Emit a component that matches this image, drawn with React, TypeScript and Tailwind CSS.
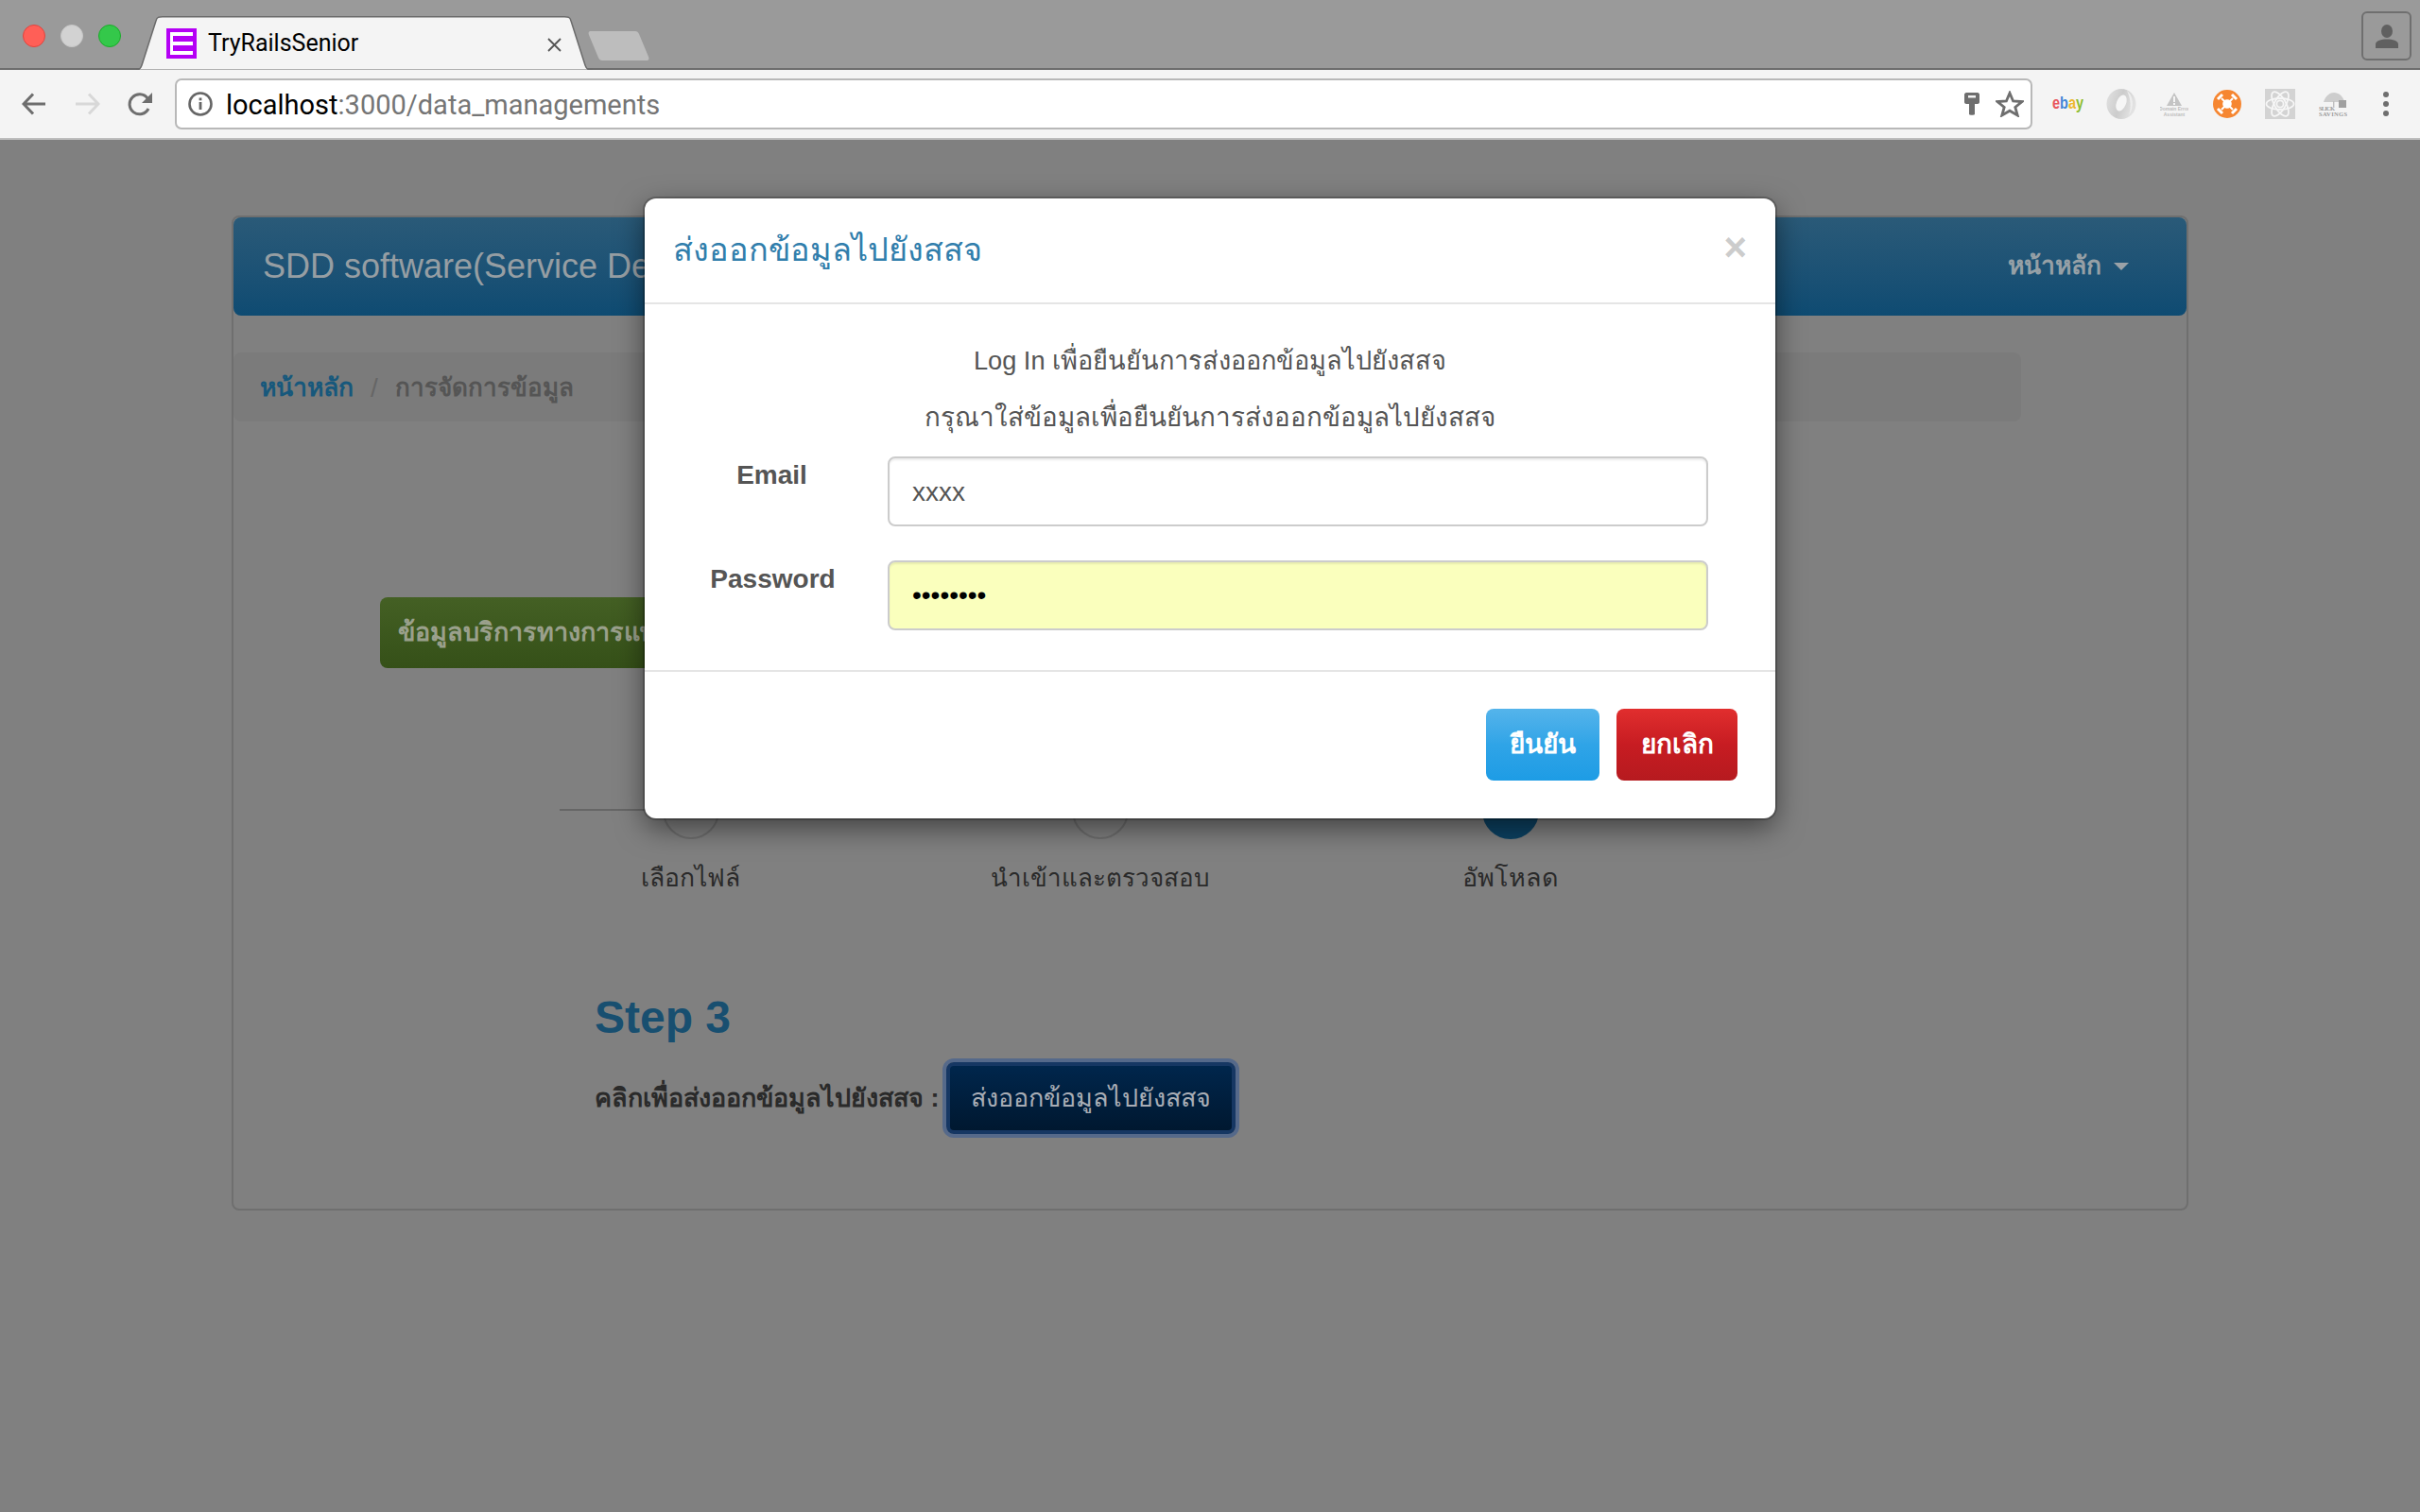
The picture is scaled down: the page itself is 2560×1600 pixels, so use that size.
import React from "react";

function Tab() {
  return (
    <div className="relative ml-[16px] mt-[17px] h-[57px] w-[483px] shrink-0">
      <svg className="absolute inset-0" width="483" height="57" viewBox="0 0 483 57">
        <path d="M0 56.5 H2 C4 56.5 5 55 6 52 L21 5 C22 1 24 0.8 28 0.8 H453 C457 0.8 459 1 460 5 L475 52 C476 55 477 56.5 479 56.5 H483" fill="#f4f4f4" stroke="#6b6b6b" strokeWidth="1.5" />
      </svg>
      <div className="absolute left-[32px] top-[13px] flex items-center">
        <svg width="32" height="32" viewBox="0 0 32 32">
          <rect width="32" height="32" fill="#b400f5" />
          <rect x="4" y="4" width="3" height="24" fill="#fff" />
          <rect x="4" y="4" width="24" height="4" fill="#fff" />
          <rect x="4" y="14" width="24" height="4" fill="#fff" />
          <rect x="4" y="24" width="24" height="4" fill="#fff" />
        </svg>
        <span className="ml-[12px] font-['Roboto',sans-serif] text-[25px] leading-[32px] text-black">TryRailsSenior</span>
      </div>
      <svg className="absolute left-[435px] top-[23px]" width="15" height="15" viewBox="0 0 15 15">
        <path d="M1 1 L14 14 M14 1 L1 14" stroke="#555" strokeWidth="1.8" />
      </svg>
    </div>
  );
}

function TopBar() {
  return (
    <div className="flex h-[74px] shrink-0 border-b-2 border-[#6d6d6d] bg-[#9a9a9a]">
      <div className="ml-[24px] mt-[26px] flex h-[24px] gap-[16px]">
        <span className="h-[24px] w-[24px] rounded-full border border-[#e0443e] bg-[#ff5f57]" />
        <span className="h-[24px] w-[24px] rounded-full border border-[#c6c6c6] bg-[#d2d2d2]" />
        <span className="h-[24px] w-[24px] rounded-full border border-[#1aab29] bg-[#34c84a]" />
      </div>
      <Tab />
      <svg className="ml-[-5px] mt-[33px] shrink-0" width="65" height="31" viewBox="0 0 65 31">
        <path d="M3 0 H50 C52 0 53 1 54 3 L64 27 C65 30 64 31 62 31 H15 C13 31 12 30 11 28 L1 4 C0 1 1 0 3 0 Z" fill="#bdbdbd" />
      </svg>
      <div className="ml-auto mr-[9px] mt-[12px] flex h-[52px] w-[53px] items-center justify-center rounded-[6px] border-2 border-[#6f6f6f]">
        <svg width="24" height="25" viewBox="0 0 24 25">
          <ellipse cx="12" cy="7" rx="6" ry="7" fill="#606060" />
          <path d="M0 25 V21 C0 17 6 15.5 12 15.5 C18 15.5 24 17 24 21 V25 Z" fill="#606060" />
        </svg>
      </div>
    </div>
  );
}

function Toolbar() {
  return (
    <div className="flex h-[74px] shrink-0 items-center border-b-2 border-[#bdbdbd] bg-[#f4f4f4]">
      <svg className="ml-[23px] shrink-0" width="25" height="24" viewBox="0 0 25 24">
        <path d="M12 1.5 L2 12 L12 22.5 M2.5 12 H25" fill="none" stroke="#6e6e6e" strokeWidth="3" />
      </svg>
      <svg className="ml-[32px] shrink-0" width="26" height="24" viewBox="0 0 26 24">
        <path d="M14 1.5 L24 12 L14 22.5 M23.5 12 H0" fill="none" stroke="#d8d8d8" strokeWidth="3" />
      </svg>
      <svg className="ml-[29px] shrink-0" width="27" height="25" viewBox="0 0 27 25">
        <path d="M22 17 A10.5 10.5 0 1 1 21 6" fill="none" stroke="#6e6e6e" strokeWidth="3" />
        <path d="M26 0 V11 H15 Z" fill="#6e6e6e" />
      </svg>
      <div className="ml-[23px] flex h-[54px] w-[1965px] shrink-0 items-center rounded-[7px] border-2 border-[#b8b8b8] bg-white pl-[12px] pr-[7px]">
        <svg width="26" height="26" viewBox="0 0 26 26">
          <circle cx="13" cy="13" r="11.5" fill="none" stroke="#666" strokeWidth="2.6" />
          <rect x="11.6" y="11" width="2.8" height="8" fill="#666" />
          <rect x="11.6" y="6.5" width="2.8" height="2.8" fill="#666" />
        </svg>
        <span className="ml-[14px] pt-[2px] font-['Roboto',sans-serif] text-[29px] leading-[34px] text-black">
          localhost<span className="text-[#757575]">:3000/data_managements</span>
        </span>
        <svg className="ml-auto" width="16" height="24" viewBox="0 0 16 24">
          <path d="M2 0 H14 C15 0 16 1 16 2 V10 C16 11 15 12 14 12 H11 V23 C11 24 5 24 5 23 V12 H2 C1 12 0 11 0 10 V2 C0 1 1 0 2 0 Z" fill="#6e6e6e" />
          <rect x="4" y="3" width="8" height="2.5" fill="#f4f4f4" />
        </svg>
        <svg className="ml-[17px]" width="30" height="28" viewBox="0 0 30 28">
          <path d="M15 2.5 L18.6 11 L28 11.5 L20.8 17.4 L23.2 26 L15 21.2 L6.8 26 L9.2 17.4 L2 11.5 L11.4 11 Z" fill="none" stroke="#6e6e6e" strokeWidth="2.8" />
        </svg>
      </div>
      <svg className="ml-[21px] shrink-0" width="33" height="20" viewBox="0 0 33 20">
        <text x="0" y="15" fontFamily="Liberation Sans" fontSize="18" fontWeight="700" textLength="33" lengthAdjust="spacingAndGlyphs">
          <tspan fill="#e8565c">e</tspan>
          <tspan fill="#3f86d8">b</tspan>
          <tspan fill="#eeb82e">a</tspan>
          <tspan fill="#8dbd2e">y</tspan>
        </text>
      </svg>
      <svg className="ml-[24px] shrink-0" width="32" height="32" viewBox="0 0 32 32">
        <defs>
          <linearGradient id="ringGradient" x1="0" y1="0" x2="1" y2="0.3">
            <stop offset="0" stopColor="#e2e2e2" />
            <stop offset="0.55" stopColor="#cccccc" />
            <stop offset="1" stopColor="#e2e2e2" />
          </linearGradient>
        </defs>
        <ellipse cx="16" cy="16" rx="15.5" ry="16" fill="url(#ringGradient)" />
        <ellipse cx="16" cy="15" rx="5" ry="9" fill="#f6f6f6" transform="rotate(22 16 15)" />
        <path d="M22 2 C29 7 30 20 24 28 C27 20 26 10 22 2 Z" fill="#eeeeee" />
      </svg>
      <svg className="ml-[25px] shrink-0" width="30" height="25" viewBox="0 0 30 25">
        <path d="M15 0 L23 14 H7 Z" fill="#c4c4c4" />
        <rect x="14" y="4" width="2" height="6" fill="#f4f4f4" />
        <rect x="14" y="11" width="2" height="2" fill="#f4f4f4" />
        <text x="15" y="19" textAnchor="middle" fontFamily="Liberation Sans" fontSize="5" fontWeight="700" fill="#bdbdbd">Domain Error</text>
        <text x="15" y="25" textAnchor="middle" fontFamily="Liberation Sans" fontSize="5" fontWeight="700" fill="#bdbdbd">Assistant</text>
      </svg>
      <svg className="ml-[26px] shrink-0" width="30" height="30" viewBox="0 0 30 30">
        <circle cx="15" cy="15" r="15" fill="#f68631" />
        <path d="M9 9 L21 21 M21 9 L9 21" stroke="#fff" strokeWidth="2" />
        <circle cx="15" cy="15" r="4.8" fill="#fff" />
        <path d="M5 10 L10 5 M20 5 L25 10 M5 20 L10 25 M25 20 L20 25" stroke="#fff" strokeWidth="3" />
      </svg>
      <svg className="ml-[25px] shrink-0" width="32" height="32" viewBox="0 0 32 32">
        <rect width="32" height="32" fill="#d3d3d3" />
        <ellipse cx="16" cy="16" rx="14.5" ry="6" fill="none" stroke="#f6f6f6" strokeWidth="1.8" />
        <ellipse cx="16" cy="16" rx="14.5" ry="6" fill="none" stroke="#f6f6f6" strokeWidth="1.8" transform="rotate(60 16 16)" />
        <ellipse cx="16" cy="16" rx="14.5" ry="6" fill="none" stroke="#f6f6f6" strokeWidth="1.8" transform="rotate(120 16 16)" />
        <circle cx="16" cy="16" r="3.6" fill="none" stroke="#f6f6f6" strokeWidth="1.8" />
      </svg>
      <svg className="ml-[25px] shrink-0" width="30" height="25" viewBox="0 0 30 25">
        <path d="M5 10 C7 3 12 0 16 0 C21 0 26 4 27 10 Z" fill="#cdcdcd" />
        <rect x="15" y="9" width="1.4" height="6" fill="#c0c0c0" />
        <rect x="21" y="8" width="8" height="8" fill="#a0a0a0" />
        <text x="0" y="18.5" fontFamily="Liberation Serif" fontSize="6.5" fontWeight="700" fill="#9a9a9a" textLength="17">SLICK</text>
        <text x="0" y="24.5" fontFamily="Liberation Serif" fontSize="6.5" fontWeight="700" fill="#9a9a9a" textLength="30">SAVINGS</text>
      </svg>
      <div className="ml-[38px] flex flex-col gap-[4px]">
        <span className="h-[6px] w-[6px] rounded-full bg-[#6e6e6e]" />
        <span className="h-[6px] w-[6px] rounded-full bg-[#6e6e6e]" />
        <span className="h-[6px] w-[6px] rounded-full bg-[#6e6e6e]" />
      </div>
    </div>
  );
}

function Step({ label, width, circle, size }: { label: string; width: string; circle: string; size: string }) {
  return (
    <div className={`flex flex-col items-center ${width}`}>
      <span className={`h-[60px] w-[60px] rounded-full border-2 ${circle}`} />
      <span className={`mt-[21px] leading-[40px] text-[#2a2a2a] ${size}`}>{label}</span>
    </div>
  );
}

function Page() {
  return (
    <main className="flex-1 bg-[#808080] pl-[245px] pt-[80px]">
      <div className="h-[1053px] w-[2070px] rounded-[8px] border-2 border-[#6f6f6f]">
        <div className="flex h-[104px] items-center justify-between rounded-[8px] bg-gradient-to-b from-[#2a5a78] to-[#0e4b72] pl-[31px] pr-[61px]">
          <span className="text-[36px] text-[#969ea3]">SDD software(Service Delivery Data)</span>
          <span className="flex items-center gap-[13px] text-[26.5px] font-bold text-[#96a0a6]">
            หน้าหลัก
            <span className="h-0 w-0 border-x-[8px] border-t-[8px] border-x-transparent border-t-[#9aa2a8]" />
          </span>
        </div>
        <div className="mt-[39px] flex h-[73px] w-[1891px] items-center rounded-[8px] bg-[#7b7b7b] pl-[28px] pt-[2px]">
          <span className="text-[26.5px] font-bold text-[#17587c]">หน้าหลัก</span>
          <span className="ml-[18px] text-[28px] text-[#666]">/</span>
          <span className="ml-[18px] text-[26px] font-bold text-[#555]">การจัดการข้อมูล</span>
        </div>
        <div className="ml-[155px] mt-[186px] flex h-[75px] w-[560px] items-center rounded-[8px] bg-gradient-to-b from-[#446024] to-[#355018] pl-[19px] text-[27px] font-bold text-[#9aa08c]">
          ข้อมูลบริการทางการแพทย์
        </div>
        <div className="relative ml-[266px] mt-[121px] flex w-[1300px]">
          <div className="absolute left-[79px] top-[28px] h-[2px] w-[1000px] bg-[#666]" />
          <div className="relative z-10 flex">
            <Step label="เลือกไฟล์" width="w-[435px]" circle="border-[#6e6e6e] bg-[#808080]" size="text-[26.5px]" />
            <Step label="นำเข้าและตรวจสอบ" width="w-[432px]" circle="border-[#6e6e6e] bg-[#808080]" size="text-[26px]" />
            <Step label="อัพโหลด" width="w-[435px]" circle="border-[#0c4263] bg-[#0c4263]" size="text-[27px]" />
          </div>
        </div>
        <h2 className="ml-[382px] mt-[98px] text-[48px] font-bold leading-[60px] text-[#184f70]">Step 3</h2>
        <div className="ml-[382px] mt-[17px] flex items-center">
          <span className="text-[27px] font-bold text-[#2a2a2a]">คลิกเพื่อส่งออกข้อมูลไปยังสสจ :</span>
          <button className="ml-[7px] flex h-[76px] w-[306px] items-center justify-center rounded-[8px] border-4 border-[#163763] bg-gradient-to-b from-[#00264c] to-[#001830] text-[27px] text-[#a8adb5] shadow-[0_0_0_4px_#55698a]">
            ส่งออกข้อมูลไปยังสสจ
          </button>
        </div>
      </div>
    </main>
  );
}

function Modal() {
  return (
    <div className="absolute left-[682px] top-[210px] z-20 flex h-[656px] w-[1196px] flex-col rounded-[12px] bg-white shadow-[0_10px_30px_rgba(0,0,0,0.5),0_0_0_2px_rgba(0,0,0,0.2)]">
      <div className="flex h-[112px] shrink-0 items-center justify-between border-b-2 border-[#e5e5e5] px-[30px]">
        <span className="text-[34.3px] text-[#317eac]">ส่งออกข้อมูลไปยังสสจ</span>
        <span className="mt-[-6px] text-[42px] font-bold leading-none text-[#cccccc]">×</span>
      </div>
      <div className="flex flex-1 flex-col">
        <p className="mt-[40px] h-[60px] text-center text-[27.2px] leading-[40px] text-[#555]">Log In เพื่อยืนยันการส่งออกข้อมูลไปยังสสจ</p>
        <p className="h-[61px] text-center text-[27.8px] leading-[40px] text-[#555]">กรุณาใส่ข้อมูลเพื่อยืนยันการส่งออกข้อมูลไปยังสสจ</p>
        <div className="flex h-[110px] items-start">
          <label className="w-[257px] pl-[12px] pt-[2px] text-center text-[28px] font-bold leading-[36px] text-[#555]">Email</label>
          <input readOnly value="xxxx" className="h-[74px] w-[868px] rounded-[8px] border-2 border-[#cccccc] bg-white px-[24px] pt-[2px] text-[28px] text-[#555] shadow-[inset_0_2px_2px_rgba(0,0,0,0.075)] outline-none" />
        </div>
        <div className="flex items-start">
          <label className="w-[257px] pl-[14px] pt-[2px] text-center text-[28px] font-bold leading-[36px] text-[#555]">Password</label>
          <input readOnly type="password" value="xxxxxxxx" className="h-[74px] w-[868px] rounded-[8px] border-2 border-[#cccccc] bg-[#faffbd] px-[24px] text-[28px] text-black shadow-[inset_0_2px_2px_rgba(0,0,0,0.075)] outline-none" />
        </div>
      </div>
      <div className="flex h-[157px] shrink-0 items-start justify-end gap-[18px] border-t-2 border-[#e5e5e5] pr-[40px] pt-[39px]">
        <button className="h-[76px] w-[120px] rounded-[8px] bg-gradient-to-b from-[#54b4eb] via-[#2fa4e7] to-[#1d9ce5] text-[28px] font-bold text-white">ยืนยัน</button>
        <button className="h-[76px] w-[128px] rounded-[8px] bg-gradient-to-b from-[#e12e2e] via-[#c71c22] to-[#b61a1f] text-[28px] font-bold text-white">ยกเลิก</button>
      </div>
    </div>
  );
}

export default function App() {
  return (
    <div className="relative flex h-[1600px] w-[2560px] flex-col overflow-hidden font-['Liberation_Sans',sans-serif]">
      <TopBar />
      <Toolbar />
      <Page />
      <Modal />
    </div>
  );
}
